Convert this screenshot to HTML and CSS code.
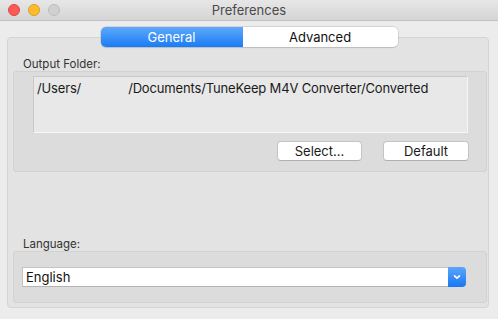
FILE: index.html
```html
<!DOCTYPE html>
<html>
<head>
<meta charset="utf-8">
<link rel="stylesheet" href="styles.css">
</head>
<body>
<div class="window">
  <div class="titlebar">
    <div class="lights">
      <span class="light red"></span>
      <span class="light yellow"></span>
      <span class="light gray"></span>
    </div>
    <div class="title">Preferences</div>
  </div>
  <div class="content">
    <div class="tabs">
      <div class="tab active">General</div>
      <div class="tab">Advanced</div>
    </div>
    <div class="tabbox">
      <div class="label label-output">Output Folder:</div>
      <div class="group group-output">
        <div class="pathfield">/Users/<span class="redacted"></span>/Documents/TuneKeep M4V Converter/Converted</div>
        <div class="buttons">
          <div class="btn btn-select">Select...</div>
          <div class="btn btn-default">Default</div>
        </div>
      </div>
      <div class="spacer"></div>
      <div class="label label-lang">Language:</div>
      <div class="group group-lang">
        <div class="select">
          <div class="select-value">English</div>
          <div class="select-arrow">
            <svg width="10" height="8" viewBox="0 0 10 8"><path d="M2.5 2.8 L5 5.2 L7.5 2.8" fill="none" stroke="#fff" stroke-width="1.6" stroke-linecap="round" stroke-linejoin="round"/></svg>
          </div>
        </div>
      </div>
    </div>
  </div>
</div>
</body>
</html>
```

FILE: styles.css
```css
html, body {
  margin: 0;
  padding: 0;
  background: #ececec;
}
.window {
  width: 498px;
  height: 319px;
  background: #ececec;
  font-family: "Inter", "Liberation Sans", sans-serif;
  color: #222;
  display: flex;
  flex-direction: column;
  overflow: hidden;
}
.titlebar {
  height: 20px;
  flex: none;
  background: linear-gradient(#e8e7e8, #d6d5d6);
  border-bottom: 1px solid #c2c1c2;
  display: flex;
  align-items: center;
  position: relative;
}
.lights {
  display: flex;
  gap: 8px;
  padding-left: 8px;
}
.light {
  width: 12px;
  height: 12px;
  border-radius: 50%;
  box-sizing: border-box;
}
.red { background: #fc5a55; border: 1px solid #e2463f; }
.yellow { background: #fdbb2e; border: 1px solid #e09e1e; }
.gray { background: #d0d0d0; border: 1px solid #bdbdbd; }
.title {
  position: absolute;
  left: 0;
  right: 0;
  top: 0;
  bottom: 0;
  text-align: center;
  line-height: 20px;
  font-size: 13px;
  color: #4a4a4a;
  pointer-events: none;
}
.content {
  flex: 1;
  display: flex;
  flex-direction: column;
  padding: 6px 9px 11px 7px;
}
.tabs {
  align-self: center;
  margin-left: 2px;
  display: flex;
  height: 20px;
  margin-bottom: -10px;
  position: relative;
  z-index: 1;
  border-radius: 5px;
  box-shadow: 0 0 0 0.5px #b9b9b9, 0 1px 1px rgba(0,0,0,0.15);
  overflow: hidden;
}
.tab {
  font-size: 13px;
  line-height: 20px;
  text-align: center;
  background: #fff;
  color: #111;
  width: 155px;
}
.tab.active {
  width: 142px;
  background: linear-gradient(#5fa8fb, #1a7cf5);
  color: #fff;
}
.tabbox {
  flex: 1;
  background: #e3e3e3;
  border: 1px solid #d4d4d4;
  border-radius: 4px;
  display: flex;
  flex-direction: column;
  padding: 20px 1px 4px 5px;
}
.label {
  font-size: 11.5px;
  color: #333;
  padding-left: 10px;
  line-height: 12px;
  margin-bottom: 1px;
}
.group {
  background: #dcdcdc;
  border: 1px solid #d2d2d2;
  border-radius: 3px;
}
.group-output {
  height: 101px;
  box-sizing: border-box;
  padding: 4px 18px 0 19px;
  display: flex;
  flex-direction: column;
}
.pathfield {
  height: 57px;
  box-sizing: border-box;
  background: #e8e8e8;
  border: 1px solid #c9c9c9;
  border-right-color: #f6f6f6;
  border-bottom-color: #f6f6f6;
  font-size: 13px;
  line-height: 18px;
  letter-spacing: -0.16px;
  padding: 2px 0 0 3px;
  color: #1a1a1a;
  white-space: nowrap;
}
.redacted {
  display: inline-block;
  width: 47px;
  height: 14px;
}
.buttons {
  display: flex;
  justify-content: flex-end;
  gap: 21px;
  margin-top: 8px;
  margin-right: -1px;
}
.btn {
  width: 85px;
  height: 20px;
  box-sizing: border-box;
  background: #fff;
  border: 1px solid #c4c4c4;
  border-bottom-color: #b0b0b0;
  border-radius: 4px;
  font-size: 13px;
  line-height: 18px;
  text-align: center;
  color: #1a1a1a;
}
.btn-default { width: 86px; }
.spacer { flex: 1; }
.group-lang {
  height: 52px;
  box-sizing: border-box;
  padding: 15px 20px 0 8px;
}
.select {
  display: flex;
  height: 20px;
}
.select-value {
  flex: 1;
  background: #fff;
  border: 1px solid #c4c4c4;
  border-right: none;
  border-bottom-color: #b4b4b4;
  font-size: 13px;
  line-height: 18px;
  padding-left: 3px;
  color: #111;
}
.select-arrow {
  width: 18px;
  background: linear-gradient(#5ba6fb, #1877f4);
  border-radius: 0 4px 4px 0;
  display: flex;
  align-items: center;
  justify-content: center;
}
```
